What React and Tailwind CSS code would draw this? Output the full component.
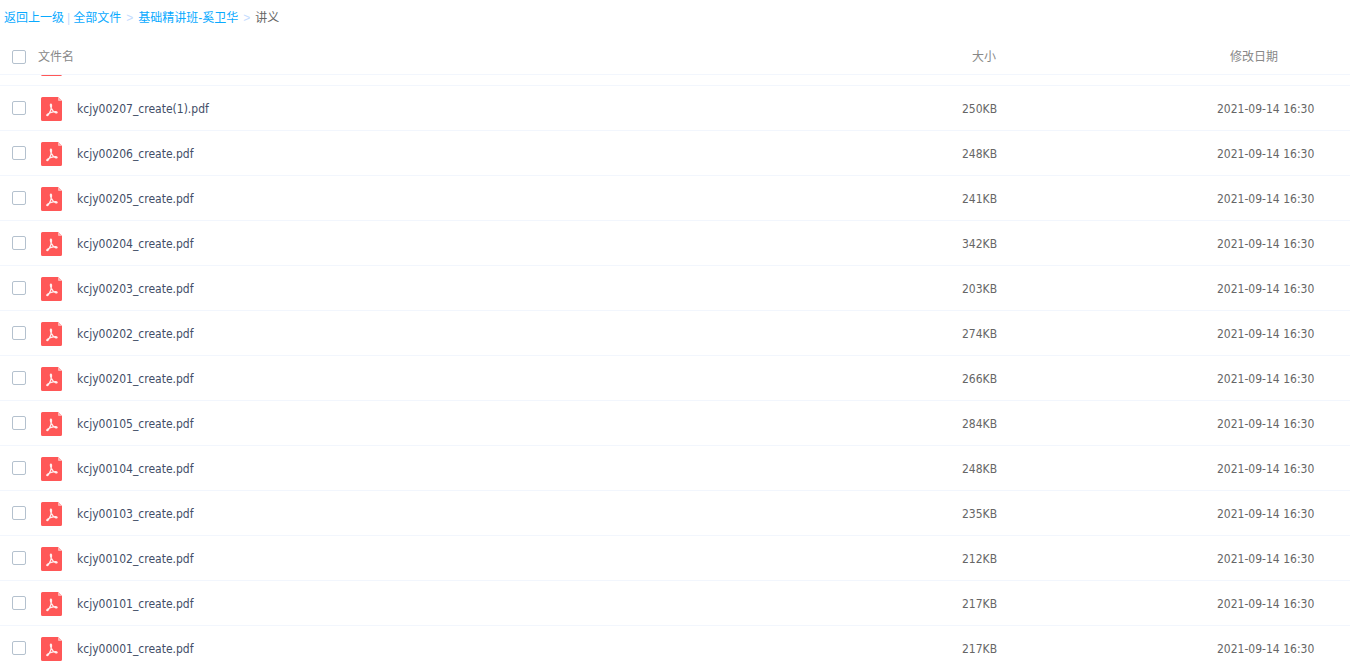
const files = [
  { name: 'kcjy00207_create(1).pdf', size: '250KB' },
  { name: 'kcjy00206_create.pdf', size: '248KB' },
  { name: 'kcjy00205_create.pdf', size: '241KB' },
  { name: 'kcjy00204_create.pdf', size: '342KB' },
  { name: 'kcjy00203_create.pdf', size: '203KB' },
  { name: 'kcjy00202_create.pdf', size: '274KB' },
  { name: 'kcjy00201_create.pdf', size: '266KB' },
  { name: 'kcjy00105_create.pdf', size: '284KB' },
  { name: 'kcjy00104_create.pdf', size: '248KB' },
  { name: 'kcjy00103_create.pdf', size: '235KB' },
  { name: 'kcjy00102_create.pdf', size: '212KB' },
  { name: 'kcjy00101_create.pdf', size: '217KB' },
  { name: 'kcjy00001_create.pdf', size: '217KB' },
]

const MODIFIED = '2021-09-14 16:30'

function PdfIcon() {
  return (
    <svg width="21" height="24" viewBox="0 0 21 24" className="block shrink-0" aria-hidden="true">
      <path d="M1.500 0H17L21 4V22.500a1.500 1.500 0 0 1-1.500 1.500h-18a1.500 1.500 0 0 1-1.500-1.500v-21a1.500 1.500 0 0 1 1.500-1.500z" fill="#ff5757" />
      <path d="M17 0L21 4h-3a1 1 0 0 1-1-1z" fill="#ffb3b3" />
      <path
        d="M9.800 7.200c-.8.300-.3 2.200.5 4 .9 1.900 2.500 3.800 4.200 4.500 1 .4 1.700.1 1.600-.4-.1-.7-1.700-.8-3.600-.5-2.100.3-4.300 1.100-5.600 2.100-.9.700-1.400 1.300-1 1.600.6.300 1.700-.9 2.600-2.600 1-1.900 1.800-4.500 2-6.700.1-1.300-.1-2.100-.7-2z"
        fill="none"
        stroke="#fff"
        strokeOpacity="0.9"
        strokeWidth="1.300"
        strokeLinejoin="round"
      />
    </svg>
  )
}

function Checkbox({ id }) {
  return (
    <input
      id={id}
      type="checkbox"
      className="block size-3.5 shrink-0 appearance-none rounded-xs border border-[#b4c1ce] bg-white checked:bg-[#09aaff]"
    />
  )
}

function Columns() {
  return (
    <colgroup>
      <col />
      <col className="w-[255px]" />
      <col className="w-[133px]" />
    </colgroup>
  )
}

function FileRow({ name, size }) {
  return (
    <tr className="hover:bg-[#f4fbff]">
      <td className="h-[45px] border-b border-[#f2f6fd] p-0">
        <div className="flex items-center pl-3">
          <Checkbox id={name} />
          <span className="ml-[15px] pt-0.5">
            <PdfIcon />
          </span>
          <label htmlFor={name} className="ml-[15px] pt-0.5 text-[#424e67]">{name}</label>
        </div>
      </td>
      <td className="border-b border-[#f2f6fd] p-0 pt-0.5">{size}</td>
      <td className="border-b border-[#f2f6fd] p-0 pt-0.5">{MODIFIED}</td>
    </tr>
  )
}

export default function App() {
  return (
    <div className="flex h-screen flex-col overflow-hidden bg-white font-['DejaVu_Sans_Condensed','Noto_Sans_CJK_SC',sans-serif] text-xs text-[#666]">
      <nav className="flex h-[37px] shrink-0 items-center pb-0.5 pl-1 font-['Liberation_Sans','Noto_Sans_CJK_SC',sans-serif]">
        <a href="#back" className="text-[#09aaff]">返回上一级</a>
        <span className="mx-[3px] text-[#c4dbfe]">|</span>
        <a href="#all" className="text-[#09aaff]">全部文件</a>
        <span className="mx-[5px] text-[#c4dbfe]">&gt;</span>
        <a href="#course" className="text-[#09aaff]">基础精讲班-奚卫华</a>
        <span className="mx-[5px] text-[#c4dbfe]">&gt;</span>
        <span>讲义</span>
      </nav>

      <table className="w-full shrink-0 table-fixed border-separate border-spacing-0 text-left text-[#888]">
        <Columns />
        <thead>
          <tr>
            <th className="h-[38px] border-b border-[#f2f6fd] p-0 pt-[3px] font-normal">
              <div className="flex items-center pl-3">
                <Checkbox id="all" />
                <label htmlFor="all" className="ml-3">文件名</label>
              </div>
            </th>
            <th className="border-b border-[#f2f6fd] p-0 pt-[3px] pl-2.5 font-normal">大小</th>
            <th className="border-b border-[#f2f6fd] p-0 pt-[3px] pl-[13px] font-normal">修改日期</th>
          </tr>
        </thead>
      </table>

      <div className="min-h-0 flex-1 overflow-hidden">
        {/* tail of the row scrolled under the header */}
        <div className="h-[11px] border-b border-[#f2f6fd] pl-[41px]">
          <div className="flex h-px items-end overflow-hidden">
            <PdfIcon />
          </div>
        </div>
        <table className="w-full table-fixed border-separate border-spacing-0 text-left">
          <Columns />
          <tbody>
            {files.map((f) => <FileRow key={f.name} {...f} />)}
          </tbody>
        </table>
      </div>
    </div>
  )
}
